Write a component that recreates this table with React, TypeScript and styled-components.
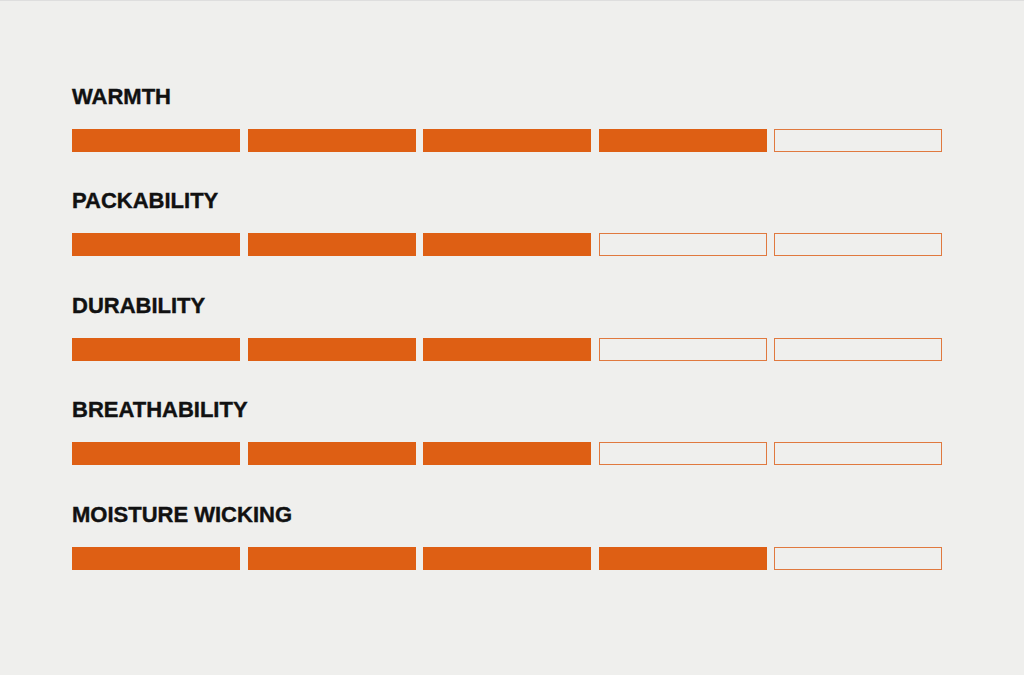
import React from "react";
import styled, { createGlobalStyle } from "styled-components";

const Global = createGlobalStyle`
  html, body { margin: 0; padding: 0; background: #efefed; }
  body { font-family: "Liberation Sans", Arial, sans-serif; }
`;

const Page = styled.div`
  box-sizing: border-box;
  width: 1024px;
  height: 675px;
  border-top: 1px solid #dedede;
  background: #efefed;
  padding: 82.5px 0 0 72px;
  display: flex;
  flex-direction: column;
  gap: 36.5px;
`;

const Row = styled.section`
  display: flex;
  flex-direction: column;
  gap: 19px;
`;

const Title = styled.h2`
  margin: 0;
  font-family: "Liberation Sans", Arial, sans-serif;
  font-weight: 700;
  font-size: 22px;
  line-height: 26px;
  color: #111111;
  -webkit-text-stroke: 0.4px #111111;
  text-transform: uppercase;
`;

const Meter = styled.div`
  width: 870px;
  display: grid;
  grid-template-columns: repeat(5, 1fr);
  gap: 7.5px;
`;

const Segment = styled.div<{ $filled: boolean }>`
  box-sizing: border-box;
  height: 23px;
  background: ${(p) => (p.$filled ? "#de5f14" : "transparent")};
  border: 1px solid ${(p) => (p.$filled ? "#de5f14" : "#e0793f")};
`;

const ratings = [
  { label: "Warmth", value: 4 },
  { label: "Packability", value: 3 },
  { label: "Durability", value: 3 },
  { label: "Breathability", value: 3 },
  { label: "Moisture Wicking", value: 4 },
];

export default function App() {
  return (
    <>
      <Global />
      <Page>
        {ratings.map((r) => (
          <Row key={r.label}>
            <Title>{r.label}</Title>
            <Meter>
              {[0, 1, 2, 3, 4].map((i) => (
                <Segment key={i} $filled={i < r.value} />
              ))}
            </Meter>
          </Row>
        ))}
      </Page>
    </>
  );
}
